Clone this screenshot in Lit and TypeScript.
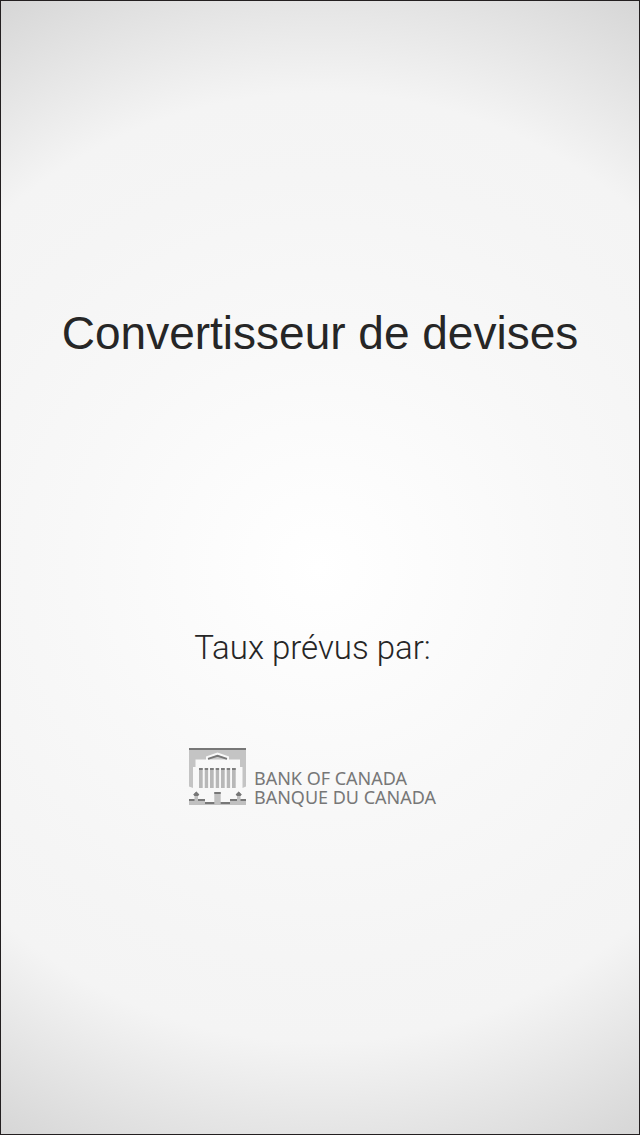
import { LitElement, html, css } from "lit";
import { customElement } from "lit/decorators.js";

@customElement("bank-emblem")
class BankEmblem extends LitElement {
  static styles = css`
    :host {
      display: block;
      flex: none;
    }
    svg {
      display: block;
    }
  `;

  render() {
    const windows = [0, 1, 2, 3, 4, 5, 6];
    return html`
      <svg width="57" height="57" viewBox="0 0 57 57" aria-hidden="true">
        <path
          fill="#c4c4c4"
          d="M0 0H57V38.5L53.5 40V19H51V11.5H40V8.5L28.5 4.5L17 8.5V11.5H6.5V19H4V40L0 38.5Z"
        />
        <rect width="57" height="2" fill="#777777" />
        <path fill="#c8c8c8" d="M19 11.5V10.5L28.5 7L38 10.5V11.5Z" />
        <path fill="none" stroke="#777777" stroke-width="1.8" d="M19 10.8L28.5 7.8L38 10.8" />
        ${windows.map((i) => {
          const x = 10 + i * 5.5;
          return html`<svg x=${x} y="20" width="3.7" height="20">
            <rect width="4" height="20" fill="#b8b8b8" />
            <rect width="4" height="2" fill="#7d7d7d" />
          </svg>`;
        })}
        <path
          fill="#c0c0c0"
          d="M0 57V51H5.5V48L4.3 46.5L7.3 43.5L10.3 46.5L9 48V51H16V54H25.3V44H31.7V54H41V51H48V48L46.7 46.5L49.7 43.5L52.7 46.5L51.5 48V51H57V57Z"
        />
        <path
          fill="#777777"
          d="M0 51H5.5V53H0ZM9 51H16V53H9ZM16 54H25.3V56H16ZM25.3 44H31.7V46H25.3ZM31.7 54H41V56H31.7ZM41 51H48V53H41ZM51.5 51H57V53H51.5ZM4.3 46.5L7.3 43.5L10.3 46.5L9 48H5.5ZM46.7 46.5L49.7 43.5L52.7 46.5L51.5 48H48Z"
        />
      </svg>
    `;
  }
}

@customElement("app-root")
class AppRoot extends LitElement {
  static styles = css`
    :host {
      display: block;
      box-sizing: border-box;
      min-height: 100vh;
      padding-bottom: 1px;
      background: #ffffff;
      color: #262626;
      font-family: "Liberation Sans", Arial, sans-serif;
    }
    .splash {
      box-sizing: border-box;
      min-height: calc(100vh - 1px);
      display: flex;
      flex-direction: column;
      align-items: center;
      border: 1px solid #231f20;
      background: radial-gradient(
        circle farthest-corner at center,
        #ffffff 0%,
        #f8f8f8 38%,
        #f5f5f5 60%,
        #f4f4f4 73%,
        #d6d6d6 100%
      );
    }
    .title {
      margin: 304px 0 0;
      font-size: 46px;
      line-height: 56px;
      font-weight: 400;
      text-align: center;
    }
    .source {
      margin: 263px 15px 0 0;
      display: flex;
      flex-direction: column;
      align-items: center;
      gap: 76px;
    }
    .caption {
      margin: 0;
      font-family: Roboto, "Liberation Sans", sans-serif;
      font-size: 33px;
      line-height: 48px;
      font-weight: 300;
    }
    .bank {
      display: flex;
      gap: 8px;
    }
    .name {
      margin: 0;
      padding-top: 21px;
      font-family: "Noto Sans", "Open Sans", sans-serif;
      font-size: 18px;
      line-height: 19px;
      color: #777777;
    }
  `;

  render() {
    return html`
      <main class="splash">
        <h1 class="title">Convertisseur de devises</h1>
        <section class="source">
          <p class="caption">Taux prévus par:</p>
          <div class="bank">
            <bank-emblem></bank-emblem>
            <p class="name">BANK OF CANADA<br />BANQUE DU CANADA</p>
          </div>
        </section>
      </main>
    `;
  }
}
